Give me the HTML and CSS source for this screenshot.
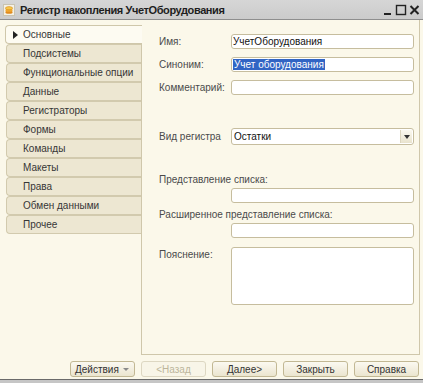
FILE: index.html
```html
<!DOCTYPE html>
<html lang="ru">
<head>
    <meta charset="UTF-8">
    <title>Регистр накопления УчетОборудования</title>
    <link rel="stylesheet" href="styles.css">
</head>
<body>
    <div class="window">
        <div class="titlebar">
            <svg class="app-icon" width="12" height="12" viewBox="0 0 12 12">
                <rect x="0.5" y="0.5" width="11" height="11" fill="#f4f1e6" stroke="#c9c3b0"/>
                <ellipse cx="6" cy="8.2" rx="3.6" ry="1.6" fill="#e08a1e"/>
                <ellipse cx="6" cy="6.2" rx="3.6" ry="1.6" fill="#f0a830"/>
                <ellipse cx="6" cy="4.2" rx="3.6" ry="1.6" fill="#f7c84a" stroke="#d98a1c" stroke-width="0.6"/>
            </svg>
            <span class="title">Регистр накопления УчетОборудования</span>
            <div class="win-buttons">
                <svg width="10" height="12" viewBox="0 0 10 12"><rect x="1" y="9" width="7" height="2" fill="#222"/></svg>
                <svg width="12" height="12" viewBox="0 0 12 12"><rect x="1.5" y="1.5" width="9" height="9" fill="none" stroke="#222" stroke-width="1.4"/></svg>
                <svg width="11" height="12" viewBox="0 0 11 12"><path d="M1.5 2 L9.5 10 M9.5 2 L1.5 10" stroke="#222" stroke-width="2"/></svg>
            </div>
        </div>
        <div class="main">
            <ul class="tabs">
                <li class="tab active"><span class="marker"></span>Основные</li>
                <li class="tab">Подсистемы</li>
                <li class="tab">Функциональные опции</li>
                <li class="tab">Данные</li>
                <li class="tab">Регистраторы</li>
                <li class="tab">Формы</li>
                <li class="tab">Команды</li>
                <li class="tab">Макеты</li>
                <li class="tab">Права</li>
                <li class="tab">Обмен данными</li>
                <li class="tab">Прочее</li>
            </ul>
            <div class="panel">
                <div class="row">
                    <span class="label">Имя:</span>
                    <div class="field">УчетОборудования</div>
                </div>
                <div class="row">
                    <span class="label">Синоним:</span>
                    <div class="field"><span class="selected">Учет оборудования</span></div>
                </div>
                <div class="row">
                    <span class="label">Комментарий:</span>
                    <div class="field"></div>
                </div>
                <div class="row row-kind">
                    <span class="label">Вид регистра</span>
                    <div class="field combo">
                        <span class="combo-text">Остатки</span>
                        <span class="combo-btn"></span>
                    </div>
                </div>
                <div class="caption caption-first">Представление списка:</div>
                <div class="row row-indent">
                    <div class="field"></div>
                </div>
                <div class="caption">Расширенное представление списка:</div>
                <div class="row row-indent">
                    <div class="field"></div>
                </div>
                <div class="row row-note">
                    <span class="label">Пояснение:</span>
                    <div class="field memo"></div>
                </div>
            </div>
        </div>
        <div class="footer">
            <button class="btn btn-menu">Действия <span class="arrow"></span></button>
            <button class="btn" disabled>&lt;Назад</button>
            <button class="btn">Далее&gt;</button>
            <button class="btn">Закрыть</button>
            <button class="btn">Справка</button>
        </div>
    </div>
</body>
</html>
```

FILE: styles.css
```css
body {
    margin: 0;
    background: #c9c9c9;
    font-family: "Liberation Sans", Arial, sans-serif;
    font-size: 10px;
    color: #404040;
}
.window {
    width: 423px;
    height: 383px;
    background: #fbf8ea;
    display: flex;
    flex-direction: column;
    box-sizing: border-box;
    border-bottom: 3px solid #c6c6c6;
}
.titlebar {
    height: 19px;
    flex: none;
    background: linear-gradient(#d6d6d6, #cbcbcb);
    border-bottom: 1px solid #8e8e8e;
    display: flex;
    align-items: center;
    padding-left: 3px;
}
.app-icon {
    margin-right: 5px;
}
.title {
    font-weight: bold;
    font-size: 11px;
    letter-spacing: -0.4px;
    color: #1e1e1e;
}
.win-buttons {
    margin-left: auto;
    display: flex;
    align-items: center;
    gap: 2px;
    padding-right: 3px;
}
.main {
    flex: 1;
    display: flex;
    padding: 0 3px 0 6px;
}
.tabs {
    list-style: none;
    margin: 5px 0 0 0;
    padding: 0;
    width: 136px;
    border-right: 1px solid #cfc7ab;
    box-sizing: border-box;
}
.tab {
    height: 17px;
    line-height: 17px;
    border: 1px solid #d2caae;
    border-right: none;
    border-radius: 4px 0 0 4px;
    background: #ede7d2;
    padding-left: 16px;
    color: #363636;
    white-space: nowrap;
}
.tab.active {
    background: #fdfbf2;
    border-color: #cfc7ab;
    margin-right: -1px;
    margin-left: -1px;
    position: relative;
    padding-left: 7px;
}
.marker {
    display: inline-block;
    width: 0;
    height: 0;
    border-left: 5px solid #222;
    border-top: 4px solid transparent;
    border-bottom: 4px solid transparent;
    margin-right: 5px;
    vertical-align: -1px;
}
.panel {
    flex: 1;
    border-right: 1px solid #cfc7ab;
    border-bottom: 1px solid #cfc7ab;
    padding: 14px 5px 0 17px;
}
.row {
    display: flex;
    align-items: center;
    margin-bottom: 8px;
}
.label {
    width: 72px;
    flex: none;
    color: #4a4a4a;
}
.field {
    flex: 1;
    height: 15px;
    box-sizing: border-box;
    background: #fff;
    border: 1px solid #c6bd9e;
    border-radius: 3px;
    line-height: 13px;
    padding-left: 1px;
    color: #111;
    font-size: 10px;
}
.selected {
    background: #3165c4;
    color: #fff;
    padding: 0 1px;
}
.row-kind {
    margin-top: 33px;
}
.combo {
    height: 17px;
    display: flex;
    align-items: center;
    padding-right: 1px;
}
.combo-text {
    flex: 1;
    padding-left: 1px;
}
.combo-btn {
    width: 12px;
    height: 13px;
    box-sizing: border-box;
    border-left: 1px solid #ddd6bf;
    background: linear-gradient(#fbf9f0, #e9e3cd);
    display: flex;
    align-items: center;
    justify-content: center;
}
.combo-btn::after {
    content: "";
    border-top: 4px solid #333;
    border-left: 3px solid transparent;
    border-right: 3px solid transparent;
}
.caption {
    height: 12px;
    line-height: 12px;
    color: #4a4a4a;
    margin-top: 6px;
    margin-bottom: 2px;
}
.caption-first {
    margin-top: 29px;
}
.row-indent {
    padding-left: 72px;
    margin-bottom: 0;
}
.row-note {
    margin-top: 9px;
    align-items: flex-start;
}
.row-note .label {
    margin-top: 2px;
}
.memo {
    height: 58px;
}
.footer {
    height: 25px;
    flex: none;
    display: flex;
    justify-content: flex-end;
    align-items: flex-start;
    gap: 6px;
    padding: 6px 4px 0 0;
    box-sizing: border-box;
    border-bottom: 1px solid #6a6a6a;
}
.btn {
    width: 65px;
    height: 16px;
    padding: 0;
    font-family: inherit;
    font-size: 10px;
    color: #333;
    background: linear-gradient(#fbf9f1, #ebe5cf);
    border: 1px solid #c2b894;
    border-radius: 3px;
}
.btn:disabled {
    color: #bcb59c;
    border-color: #ddd7c2;
    background: #f8f5e8;
}
.btn-menu {
    text-align: left;
    padding-left: 4px;
    display: flex;
    align-items: center;
}
.arrow {
    margin-left: auto;
    margin-right: 5px;
    border-top: 3px solid #8a8a8a;
    border-left: 3px solid transparent;
    border-right: 3px solid transparent;
}
```
